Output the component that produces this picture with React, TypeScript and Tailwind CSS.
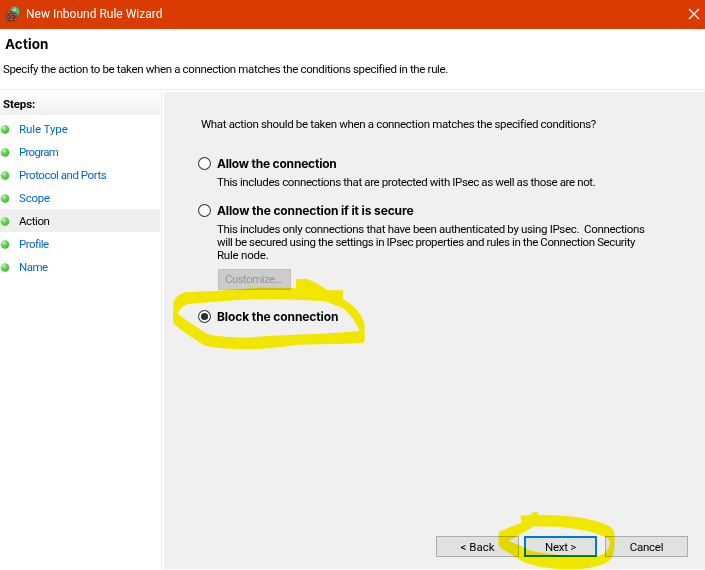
import type { ReactNode } from "react";

const steps = [
  { name: "Rule Type", tracking: "tracking-[-0.07px]" },
  { name: "Program", tracking: "tracking-[-0.72px]" },
  { name: "Protocol and Ports", tracking: "tracking-[-0.47px]" },
  { name: "Scope", tracking: "tracking-[-0.19px]" },
  { name: "Action", tracking: "tracking-[-0.41px]", active: true },
  { name: "Profile", tracking: "tracking-[-0.55px]" },
  { name: "Name", tracking: "tracking-[-0.53px]" },
];

function FirewallIcon() {
  return (
    <svg width="16" height="16" viewBox="0 0 16 16">
      <defs>
        <radialGradient id="globe" cx="40%" cy="30%">
          <stop offset="0" stopColor="#d8f4ff" />
          <stop offset="0.5" stopColor="#4badea" />
          <stop offset="1" stopColor="#1b5fb8" />
        </radialGradient>
      </defs>
      <circle cx="10.2" cy="5.6" r="5.2" fill="url(#globe)" />
      <path d="M6.500 2l2-1.200 1.500.7-1 2-2 .8zM11.500 2l2 .4 1.500 3-1 3-2 1.500-1-2.500z" fill="#55bf45" />
      <path d="M1 7l1.500-1.500h3L7 4.500l2 1.500 2.500 1v7L10 15.500H1z" fill="#7c3a2c" />
      <path d="M1.500 8.500h2M5 8.500h2.500M9 8.500h2M2.500 11h2M6 11h2.500M1.500 13.500h2M5 13.500h2.500M9 13.500h2M3 6.500h2M7 6.300h2" stroke="#b5705c" strokeWidth="1" fill="none" />
      <path d="M4.200 7.500v2M8.200 7.500v2M5.200 10v2M9.200 10v2M4.200 12.500v2M8.200 12.500v2" stroke="#4c2520" strokeWidth="0.7" />
    </svg>
  );
}

function Bullet() {
  return (
    <svg width="10" height="10" viewBox="0 0 10 10" className="shrink-0">
      <defs>
        <radialGradient id="bullet" cx="35%" cy="30%" r="70%">
          <stop offset="0" stopColor="#d2f5c9" />
          <stop offset="0.45" stopColor="#6bd858" />
          <stop offset="1" stopColor="#3cbe2c" />
        </radialGradient>
      </defs>
      <circle cx="5" cy="5.500" r="4.300" fill="url(#bullet)" />
    </svg>
  );
}

function Radio({ checked = false, children }: { checked?: boolean; children: ReactNode }) {
  return (
    <label className="flex h-[17px] items-center gap-[6px] font-['Inter',sans-serif] text-[12px] font-bold leading-[17px] whitespace-nowrap">
      <svg width="13" height="13" viewBox="0 0 13 13" className="shrink-0">
        <circle cx="6.5" cy="6.5" r="5.950" fill="#fff" stroke="#333" strokeWidth="1.050" />
        {checked && <circle cx="6.5" cy="6.5" r="3.600" fill="#2d2d2d" />}
      </svg>
      {children}
    </label>
  );
}

export default function App() {
  return (
    <div className="relative flex h-[570px] w-[705px] flex-col overflow-hidden bg-white font-['Roboto','Liberation_Sans',sans-serif] text-[11.5px] text-black">
      <header className="flex h-[29px] shrink-0 items-center justify-between bg-[#da3b01] pr-[5px] pb-[2px] pl-[5px] text-white">
        <div className="flex items-center gap-[5px]">
          <FirewallIcon />
          <span className="pt-px text-[12px]">New Inbound Rule Wizard</span>
        </div>
        <svg width="12" height="12" viewBox="0 0 12 12">
          <path d="M1 1l10 10M11 1L1 11" stroke="#fff" strokeWidth="1.200" />
        </svg>
      </header>

      <section className="flex h-[61px] shrink-0 flex-col border-b border-[#ececec] pl-1 whitespace-nowrap">
        <h1 className="mt-[6px] ml-px h-[18px] font-['Inter',sans-serif] text-[13.5px] leading-[18px] font-bold tracking-[0.1px]">Action</h1>
        <p className="-ml-px mt-2 h-4 leading-4 tracking-[-0.355px]">
          Specify the action to be taken when a connection matches the conditions specified in the rule.
        </p>
      </section>

      <div className="mt-[2px] flex h-[477px] shrink-0">
        <aside className="w-[162px] shrink-0 border-r border-[#e9e9e9] pr-px">
          <h2 className="h-[23px] bg-linear-to-b from-white to-[#f0f0f0] pl-[3px] leading-[24px] font-bold tracking-[-0.13px]">
            Steps:
          </h2>
          <ul className="mt-[2px]">
            {steps.map((s) => (
              <li
                key={s.name}
                className={`flex h-[23px] items-center gap-[9px] whitespace-nowrap ${s.tracking} ${s.active ? "bg-[#efefef] text-black" : "text-[#0066cc]"}`}
              >
                <Bullet />
                <span className="pt-[2px]">{s.name}</span>
              </li>
            ))}
          </ul>
        </aside>

        <main className="ml-[2px] flex min-w-0 flex-1 flex-col justify-between bg-[#f0f0f0] whitespace-nowrap">
          <div className="pl-[34px]">
            <p className="mt-6 ml-[3px] h-4 leading-4 tracking-[-0.341px]">
              What action should be taken when a connection matches the specified conditions?
            </p>
            <div className="mt-[23px]">
              <Radio><span className="tracking-[-0.2px]">Allow the connection</span></Radio>
              <p className="mt-[3px] ml-[19px] h-[14px] leading-[14px] tracking-[-0.38px]">
                This includes connections that are protected with IPsec as well as those are not.
              </p>
            </div>
            <div className="mt-[13px]">
              <Radio><span className="tracking-[-0.12px]">Allow the connection if it is secure</span></Radio>
              <div className="mt-1 ml-[19px] leading-[13px]">
                <p className="tracking-[-0.345px]">This includes only connections that have been authenticated by using IPsec.&nbsp; Connections</p>
                <p className="tracking-[-0.396px]">will be secured using the settings in IPsec properties and rules in the Connection Security</p>
                <p className="tracking-[-0.22px]">Rule node.</p>
              </div>
              <button disabled className="mt-[7px] ml-5 flex h-[21px] w-[73px] items-center justify-center border border-[#bfbfbf] bg-[#cccccc] pt-px pr-[2px] tracking-[-0.55px] text-[#969696]">
                Customize...
              </button>
            </div>
            <div className="mt-[18px]">
              <Radio checked><span className="tracking-[-0.1px]">Block the connection</span></Radio>
            </div>
          </div>

          <footer className="mb-3 flex justify-end pr-[17px]">
            <button className="h-[21px] w-[83px] border border-[#adadad] bg-[#e1e1e1] leading-[20px]">&lt; Back</button>
            <button className="ml-[5px] h-[21px] w-[73px] border-2 border-[#0078d7] bg-[#e1e1e1] leading-[18px] tracking-[-0.27px]">Next &gt;</button>
            <button className="ml-2 h-[21px] w-[83px] border border-[#adadad] bg-[#e1e1e1] leading-[20px] tracking-[-0.25px]">Cancel</button>
          </footer>
        </main>
      </div>

      <svg className="pointer-events-none absolute inset-0 mix-blend-multiply" width="705" height="570" viewBox="0 0 705 570" fill="#fff500" fillRule="evenodd">
        <path
          transform="translate(165 260) scale(.33333)"
          d="M25 130Q30 105 60 97L160 92L290 83L393 85V58L425 57Q460 70 488 91L534 91V117Q590 150 599 195V240Q599 248 590 249L540 251L400 254Q330 265 255 268Q170 268 120 257Q60 222 24 190ZM38 161Q50 134 75 131L190 122Q330 112 480 124L535 145Q570 175 583 213L460 222Q330 225 245 233Q160 232 130 223Q90 200 38 161Z"
        />
        <path
          transform="translate(425 500) scale(.33333)"
          d="M222 95L290 68L286 48L315 45L325 37H339V45Q440 44 500 60Q560 74 568 95Q572 150 560 175Q540 200 470 207L400 207Q320 198 295 185L228 145Q220 138 220 120ZM250 122Q300 98 325 79L400 80Q490 88 540 110Q558 118 554 133Q550 160 520 168L430 168Q350 160 310 150L290 139Z"
        />
      </svg>
    </div>
  );
}
